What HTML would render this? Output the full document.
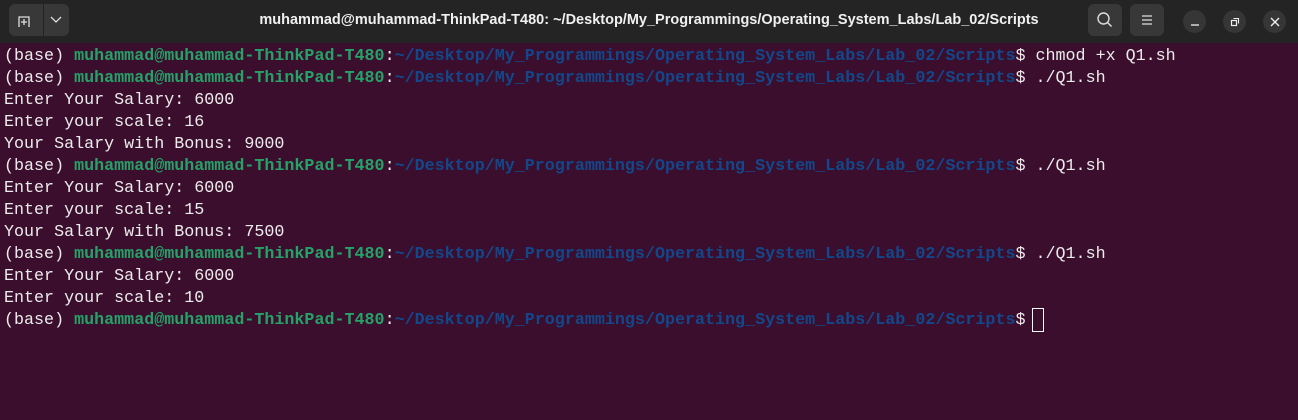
<!DOCTYPE html>
<html><head><meta charset="utf-8"><style>
html,body{margin:0;padding:0;width:1298px;height:420px;overflow:hidden;background:#3a0e2c;}
.hdr{position:absolute;left:0;top:0;width:1298px;height:43px;background:#242424;}
.title{position:absolute;left:0;width:1298px;top:12px;text-align:center;color:#f0f0f0;font:bold 14.5px "Liberation Sans",sans-serif;}
.btn{position:absolute;background:#383838;border-radius:6px;}
.cb{position:absolute;top:10px;width:23px;height:23px;border-radius:50%;background:#363636;}
.term{position:absolute;left:4px;top:46px;font-family:"Liberation Mono",monospace;font-size:16.7px;line-height:22px;color:#ececec;white-space:pre;}
.g{color:#26a269;font-weight:bold}.b{color:#12488b;font-weight:bold}
.cur{position:absolute;left:1032px;top:308px;width:10px;height:22px;border:1px solid #fff;}
</style></head><body>
<div class="hdr">
 <div class="btn" style="left:9px;top:4px;width:60px;height:32px;border-radius:6px;"></div>
 <div style="position:absolute;left:43px;top:4px;width:1px;height:32px;background:#242424"></div>
 <svg style="position:absolute;left:16px;top:12px" width="20" height="18" viewBox="0 0 20 18"><path d="M3 15V5h10v10" fill="none" stroke="#ddd" stroke-width="1.3"/><path d="M8 7v6M5 10h6" stroke="#ddd" stroke-width="1.3"/></svg>
 <svg style="position:absolute;left:50px;top:14px" width="12" height="10"><path d="M1 3l5 5 5-5" fill="none" stroke="#ddd" stroke-width="1.3"/></svg>
 <div class="title">muhammad@muhammad-ThinkPad-T480: ~/Desktop/My_Programmings/Operating_System_Labs/Lab_02/Scripts</div>
 <div class="btn" style="left:1088px;top:4px;width:34px;height:32px"></div>
 <svg style="position:absolute;left:1096px;top:11px" width="18" height="18"><circle cx="7.5" cy="7.5" r="5.5" fill="none" stroke="#ddd" stroke-width="1.4"/><path d="M11.5 11.5l4 4" stroke="#ddd" stroke-width="1.5"/></svg>
 <div class="btn" style="left:1130px;top:4px;width:34px;height:32px"></div>
 <svg style="position:absolute;left:1140px;top:13px" width="14" height="14"><path d="M2 3h10M2 7h10M2 11h10" stroke="#ddd" stroke-width="1.2"/></svg>
 <div class="cb" style="left:1183px"></div><svg style="position:absolute;left:1189px;top:16px" width="12" height="12"><path d="M2 9h8" stroke="#eee" stroke-width="1.3"/></svg>
 <div class="cb" style="left:1223px"></div><svg style="position:absolute;left:1229px;top:16px" width="12" height="12"><rect x="2.5" y="4.5" width="5" height="5" fill="none" stroke="#eee" stroke-width="1.2"/><path d="M4.5 2.5h5v5" fill="none" stroke="#eee" stroke-width="1.1"/></svg>
 <div class="cb" style="left:1263px"></div><svg style="position:absolute;left:1269px;top:16px" width="12" height="12"><path d="M2 2l8 8M10 2l-8 8" stroke="#eee" stroke-width="1.4"/></svg>
</div>
<div class="term">(base) <span class="g">muhammad@muhammad-ThinkPad-T480</span>:<span class="b">~/Desktop/My_Programmings/Operating_System_Labs/Lab_02/Scripts</span>$ chmod +x Q1.sh
(base) <span class="g">muhammad@muhammad-ThinkPad-T480</span>:<span class="b">~/Desktop/My_Programmings/Operating_System_Labs/Lab_02/Scripts</span>$ ./Q1.sh
Enter Your Salary: 6000
Enter your scale: 16
Your Salary with Bonus: 9000
(base) <span class="g">muhammad@muhammad-ThinkPad-T480</span>:<span class="b">~/Desktop/My_Programmings/Operating_System_Labs/Lab_02/Scripts</span>$ ./Q1.sh
Enter Your Salary: 6000
Enter your scale: 15
Your Salary with Bonus: 7500
(base) <span class="g">muhammad@muhammad-ThinkPad-T480</span>:<span class="b">~/Desktop/My_Programmings/Operating_System_Labs/Lab_02/Scripts</span>$ ./Q1.sh
Enter Your Salary: 6000
Enter your scale: 10
(base) <span class="g">muhammad@muhammad-ThinkPad-T480</span>:<span class="b">~/Desktop/My_Programmings/Operating_System_Labs/Lab_02/Scripts</span>$ </div>
<div class="cur"></div>
</body></html>
